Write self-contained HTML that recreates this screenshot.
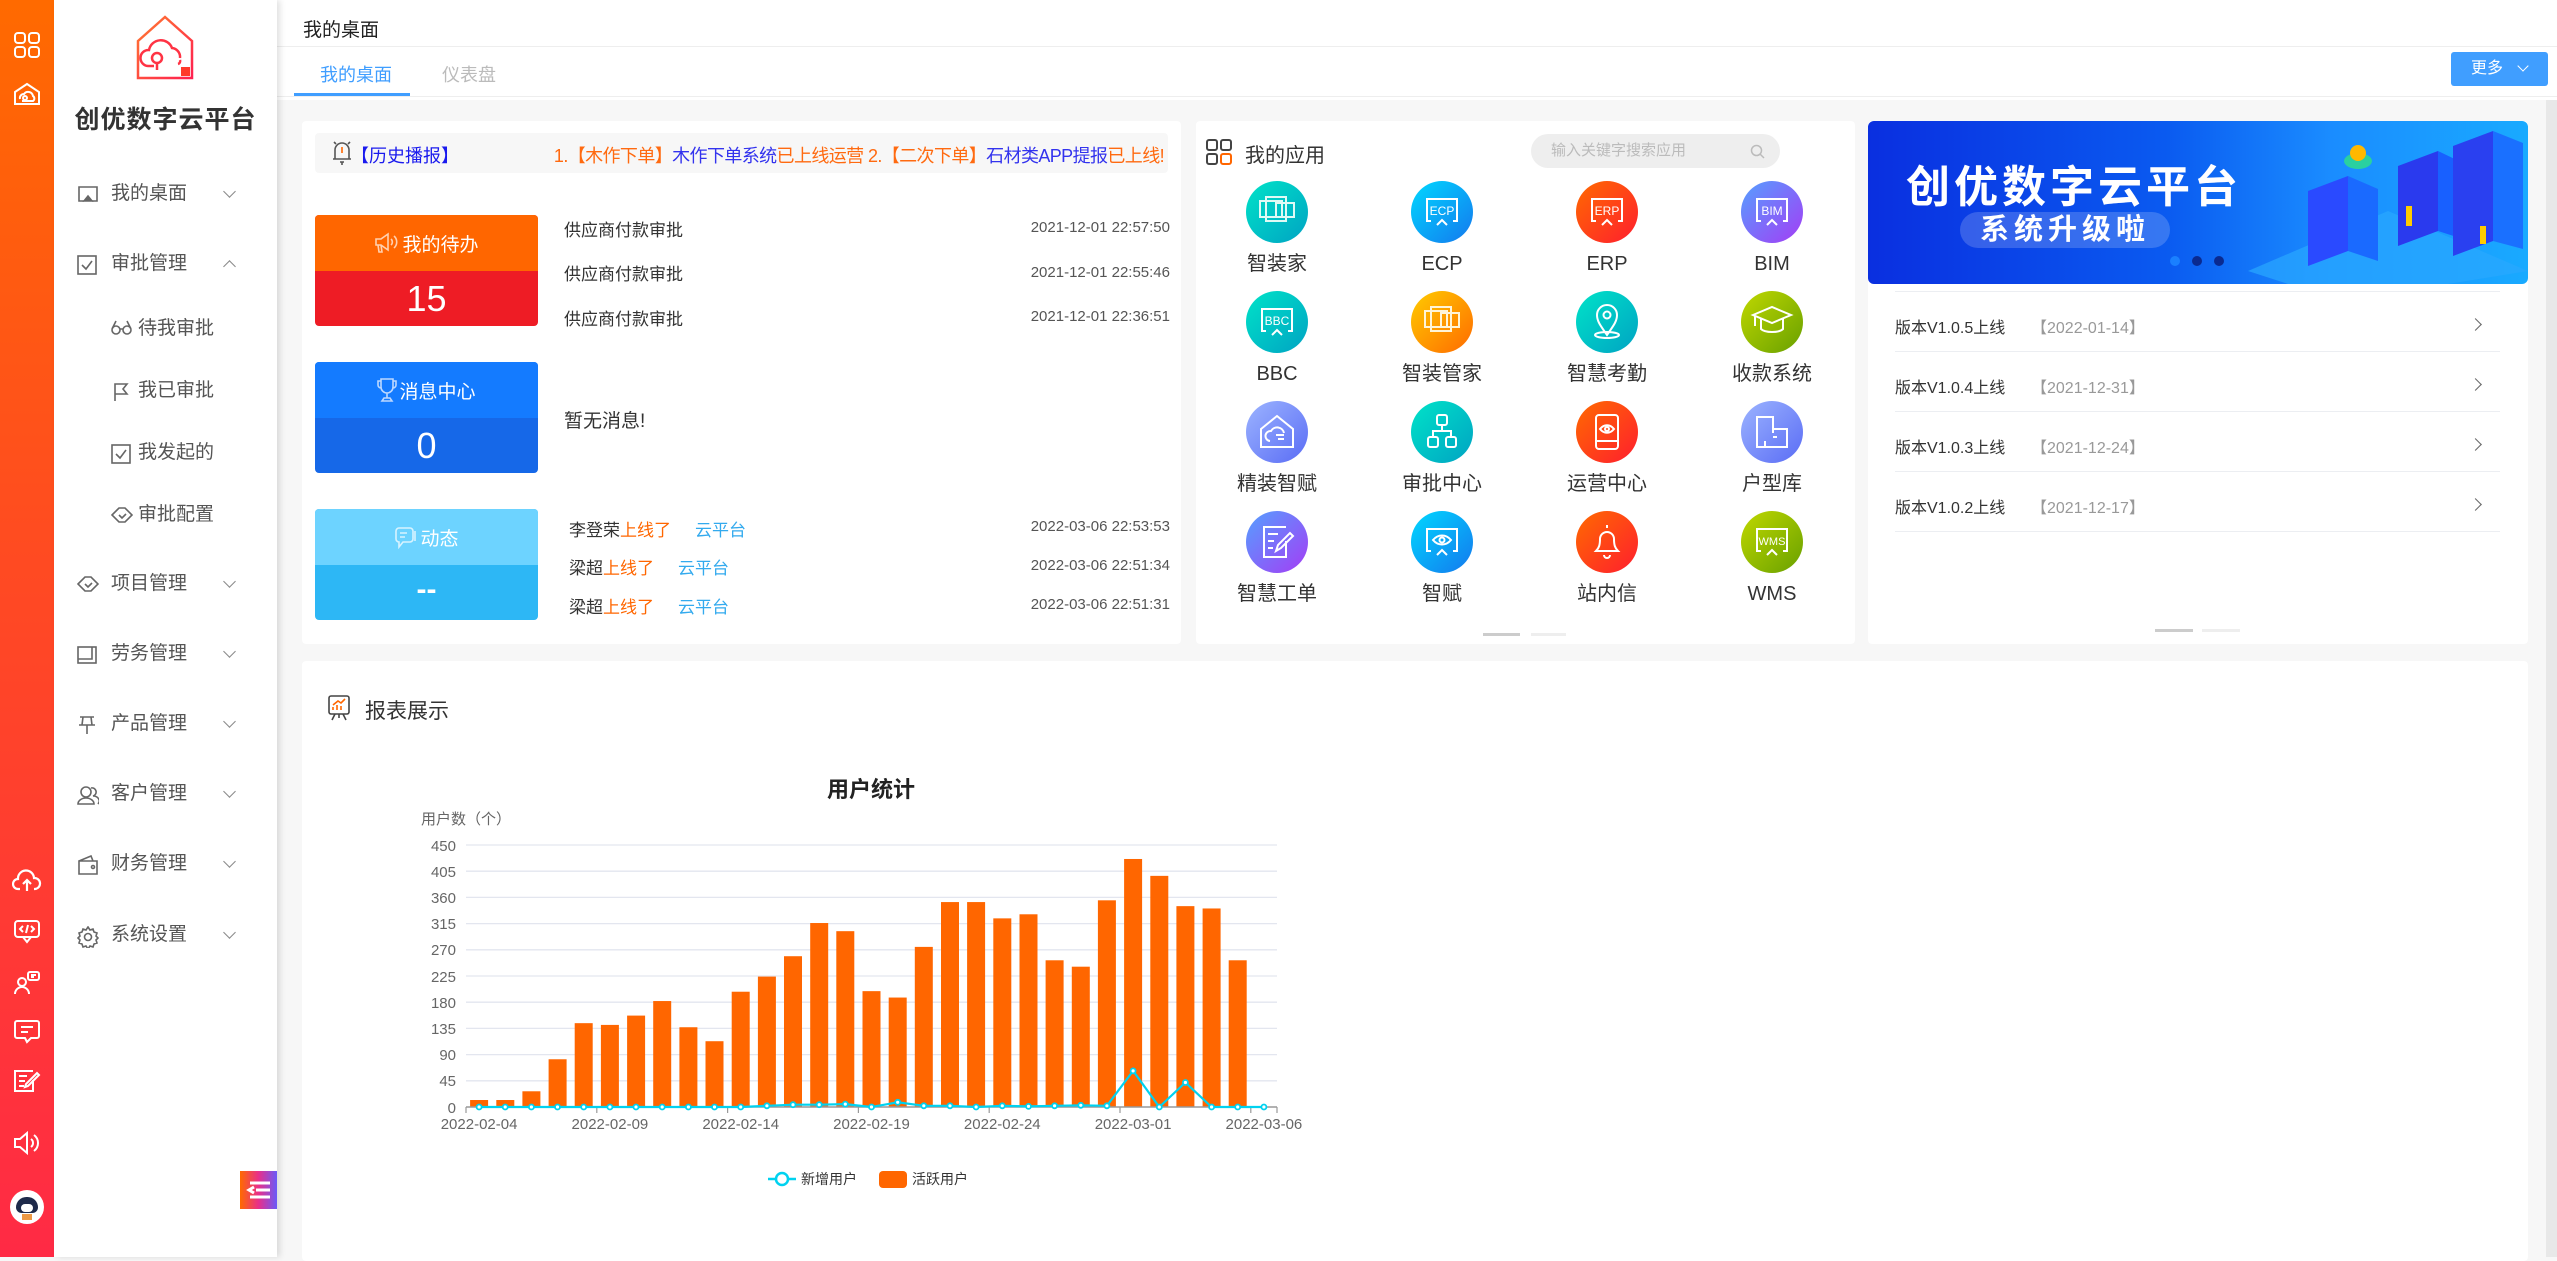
<!DOCTYPE html>
<html><head><meta charset="utf-8">
<style>
*{margin:0;padding:0;box-sizing:border-box}
body{width:2557px;height:1257px;overflow:hidden;position:relative;background:#f7f7f7;font-family:"Liberation Sans","Noto Sans CJK SC",sans-serif;color:#333}
.a{position:absolute}
.bar{left:0;top:0;width:54px;height:1257px;background:linear-gradient(180deg,#ff6a00 0%,#ff4a22 45%,#ff2a45 100%)}
.side{left:54px;top:0;width:223px;height:1257px;background:#fff;box-shadow:3px 0 6px rgba(0,0,0,.12);z-index:2}
.mi{position:absolute;left:0;width:223px;height:30px;font-size:19px;color:#555;line-height:30px}
.mi svg{position:absolute;left:23px;top:6px}
.mi span{position:absolute;left:57px}
.mi i{position:absolute;left:171px;top:8px;width:9px;height:9px;border-right:1.4px solid #888;border-bottom:1.4px solid #888;transform:rotate(45deg)}
.mi i.up{transform:rotate(-135deg);top:13px}
.sub span{left:84px}
.sub svg{left:57px}
.card{background:#fff;border-radius:4px}
.box{position:absolute;left:315px;width:223px;border-radius:4px;overflow:hidden;color:#fff;text-align:center}
.box .t{font-size:19px;display:flex;align-items:center;justify-content:center;gap:2px}
.row{position:absolute;font-size:17px;color:#333}
.tm{position:absolute;right:1387px;font-size:15px;color:#555}
.app{position:absolute;width:150px;text-align:center}
.app .c{width:62px;height:62px;border-radius:50%;margin:0 auto;display:flex;align-items:center;justify-content:center}
.app .l{font-size:20px;color:#333;margin-top:4px;line-height:24px}
.ver{position:absolute;left:1895px;width:605px;height:60px;border-bottom:1px solid #eceef2;font-size:16px;color:#333}
.ver span{position:absolute;top:22px}
.ver b{font-weight:normal;color:#999;position:absolute;left:136px;top:22px}
.ver i{position:absolute;right:20px;top:28px;width:9px;height:9px;border-right:1.4px solid #666;border-top:1.4px solid #666;transform:rotate(45deg)}
</style></head><body>

<div class="a bar">
 <svg class="a" style="left:13px;top:31px" width="28" height="28" viewBox="0 0 28 28" fill="none" stroke="#fff" stroke-width="2"><rect x="2" y="2" width="10" height="10" rx="3"/><rect x="16" y="2" width="10" height="10" rx="3"/><rect x="2" y="16" width="10" height="10" rx="3"/><rect x="16" y="16" width="10" height="10" rx="3"/></svg>
 <svg class="a" style="left:13px;top:82px" width="28" height="24" viewBox="0 0 28 24" fill="none" stroke="#fff" stroke-width="2"><path d="M2 10 L14 2 L26 10 V22 H2 Z"/><path d="M7 17 a4 4 0 0 1 4-5 a5 5 0 0 1 9 2 a3 3 0 0 1 0 5 H9"/><circle cx="12" cy="16" r="2"/></svg>
 <svg class="a" style="left:12px;top:868px" width="30" height="26" viewBox="0 0 30 26" fill="none" stroke="#fff" stroke-width="2.2"><path d="M8 21 H6 a5 5 0 0 1 0-10 a8 8 0 0 1 16-1 a5 5 0 0 1 1 11 h-1"/><path d="M15 23 V12 M11 16 l4-4 4 4"/></svg>
 <svg class="a" style="left:13px;top:919px" width="28" height="26" viewBox="0 0 28 26" fill="none" stroke="#fff" stroke-width="2"><rect x="2" y="2" width="24" height="16" rx="3"/><path d="M10 18 l4 5 4-5 M10 7 l-3 3 3 3 M18 7 l3 3-3 3 M15 6 l-2 8"/></svg>
 <svg class="a" style="left:13px;top:970px" width="28" height="26" viewBox="0 0 28 26" fill="none" stroke="#fff" stroke-width="2"><circle cx="9" cy="12" r="4"/><path d="M2 24 a7 7 0 0 1 14 0"/><rect x="15" y="2" width="11" height="8" rx="2"/><path d="M18 5 h5 M18 7 h3"/></svg>
 <svg class="a" style="left:13px;top:1019px" width="28" height="26" viewBox="0 0 28 26" fill="none" stroke="#fff" stroke-width="2"><path d="M4 2 H24 a2 2 0 0 1 2 2 V17 a2 2 0 0 1-2 2 H18 l-4 4 -2-4 H4 a2 2 0 0 1-2-2 V4 a2 2 0 0 1 2-2z"/><path d="M8 8 h12 M8 13 h7"/></svg>
 <svg class="a" style="left:13px;top:1068px" width="28" height="26" viewBox="0 0 28 26" fill="none" stroke="#fff" stroke-width="2"><path d="M20 12 V23 H2 V3 H20"/><path d="M6 8 h8 M6 13 h6 M6 18 h5 M12 19 l3-1 11-11 -2-2 -11 11z"/></svg>
 <svg class="a" style="left:13px;top:1130px" width="28" height="26" viewBox="0 0 28 26" fill="none" stroke="#fff" stroke-width="2"><path d="M2 9 H7 L14 3 V23 L7 17 H2 Z"/><path d="M18 9 a5 5 0 0 1 0 8 M21 5 a10 10 0 0 1 0 16"/></svg>
 <div class="a" style="left:10px;top:1190px;width:34px;height:34px;border-radius:50%;background:#fff;overflow:hidden"><div class="a" style="left:6px;top:7px;width:22px;height:16px;border-radius:11px 11px 6px 6px;background:#1e2a4a"></div><div class="a" style="left:11px;top:14px;width:12px;height:8px;border-radius:4px;background:#fff"></div><div class="a" style="left:12px;top:24px;width:10px;height:6px;background:#e94"></div></div>
</div>

<div class="a side">
 <svg class="a" style="left:81px;top:14px" width="60" height="66" viewBox="0 0 60 66" fill="none" stroke-width="2.5"><defs><linearGradient id="lg" x1="0" y1="0" x2="1" y2="1"><stop offset="0" stop-color="#ff7a30"/><stop offset="1" stop-color="#ff2050"/></linearGradient></defs><path d="M30 3 L57 27 V64 H3 V27 Z" stroke="url(#lg)"/><path d="M19 52 H13 a8 8 0 0 1 1-16 a12 12 0 0 1 23-2 a9 9 0 0 1 8 10" stroke="#ff3344"/><circle cx="22" cy="44" r="5" stroke="#ff3344"/><path d="M22 49 V56 M45 46 a3 3 0 0 1-2 4" stroke="#ff3344"/><rect x="46" y="53" width="9" height="9" fill="#ff3a2a" stroke="none"/></svg>
 <div class="a" style="left:0;top:100px;width:223px;text-align:center;font-size:25px;font-weight:bold;color:#333;letter-spacing:1px">创优数字云平台</div>

 <div class="mi" style="top:179px"><svg width="22" height="18" viewBox="0 0 22 18" fill="none" stroke="#666" stroke-width="1.6"><path d="M7 16 H2 V2 H20 V16 H15"/><path d="M7 16 L11 11 L15 16Z" fill="#666"/></svg><span>我的桌面</span><i></i></div>
 <div class="mi" style="top:249px"><svg width="20" height="20" viewBox="0 0 20 20" fill="none" stroke="#666" stroke-width="1.6"><rect x="1" y="1" width="18" height="18"/><path d="M5 10 l4 4 6-8"/></svg><span>审批管理</span><i class="up"></i></div>
 <div class="mi sub" style="top:314px"><svg width="22" height="16" viewBox="0 0 22 16" fill="none" stroke="#666" stroke-width="1.6"><circle cx="5" cy="10" r="4"/><circle cx="16" cy="10" r="4"/><path d="M9 9 h3 M1 9 l4-8 M20 9 l-4-8"/></svg><span>待我审批</span></div>
 <div class="mi sub" style="top:376px"><svg width="20" height="20" viewBox="0 0 20 20" fill="none" stroke="#666" stroke-width="1.6"><path d="M4 19 V2 H16 L12 7 L16 12 H4"/></svg><span>我已审批</span></div>
 <div class="mi sub" style="top:438px"><svg width="20" height="20" viewBox="0 0 20 20" fill="none" stroke="#666" stroke-width="1.6"><rect x="1" y="1" width="18" height="18"/><path d="M5 10 l4 4 6-8"/></svg><span>我发起的</span></div>
 <div class="mi sub" style="top:500px"><svg width="22" height="18" viewBox="0 0 22 18" fill="none" stroke="#666" stroke-width="1.6"><path d="M1 9 L8 2 H14 L21 9 L14 16 H8 Z M8 9 l3 3 4-4"/></svg><span>审批配置</span></div>
 <div class="mi" style="top:569px"><svg width="22" height="18" viewBox="0 0 22 18" fill="none" stroke="#666" stroke-width="1.6"><path d="M1 9 L8 2 H14 L21 9 L14 16 H8 Z M8 9 l3 3 4-4"/></svg><span>项目管理</span><i></i></div>
 <div class="mi" style="top:639px"><svg width="20" height="20" viewBox="0 0 20 20" fill="none" stroke="#666" stroke-width="1.6"><rect x="1" y="2" width="18" height="16"/><path d="M1 14 H15 V2"/></svg><span>劳务管理</span><i></i></div>
 <div class="mi" style="top:709px"><svg width="20" height="20" viewBox="0 0 20 20" fill="none" stroke="#666" stroke-width="1.6"><path d="M3 2 H17 M6 2 L5 10 H15 L14 2 M2 10 H18 M10 10 V19"/></svg><span>产品管理</span><i></i></div>
 <div class="mi" style="top:779px"><svg width="22" height="20" viewBox="0 0 22 20" fill="none" stroke="#666" stroke-width="1.6"><circle cx="9" cy="7" r="5"/><path d="M1 19 a8 6 0 0 1 16 0Z M14 3 a4 4 0 0 1 2 8 a6 5 0 0 1 5 8"/></svg><span>客户管理</span><i></i></div>
 <div class="mi" style="top:849px"><svg width="22" height="20" viewBox="0 0 22 20" fill="none" stroke="#666" stroke-width="1.6"><path d="M2 6 H20 V19 H2 Z M2 6 L14 1 L16 6"/><circle cx="16" cy="12" r="1.5"/></svg><span>财务管理</span><i></i></div>
 <div class="mi" style="top:920px"><svg width="22" height="22" viewBox="0 0 22 22" fill="none" stroke="#666" stroke-width="1.6"><circle cx="11" cy="11" r="3.5"/><path d="M11 1 l2 3 3-1 1 3 3 1-1 3 2 2-2 2 1 3-3 1-1 3-3-1-2 3-2-3-3 1-1-3-3-1 1-3-2-2 2-2-1-3 3-1 1-3 3 1z"/></svg><span>系统设置</span><i></i></div>

 <div class="a" style="left:186px;top:1171px;width:37px;height:38px;background:linear-gradient(90deg,#ff6a00,#e8308a,#6a5af9)"><svg class="a" style="left:6px;top:9px" width="26" height="20" viewBox="0 0 26 20" stroke="#fff" stroke-width="3" fill="none"><path d="M4 3 H24 M10 10 H24 M4 17 H24 M8 7 L3 10 L8 13"/></svg></div>
</div>

<!-- header -->
<div class="a" style="left:277px;top:0;width:2280px;height:100px;background:#fff"></div>
<div class="a" style="left:303px;top:15px;font-size:19px;color:#222">我的桌面</div>
<div class="a" style="left:277px;top:46px;width:2280px;height:1px;background:#eee"></div>
<div class="a" style="left:320px;top:61px;font-size:18px;color:#409eff">我的桌面</div>
<div class="a" style="left:442px;top:61px;font-size:18px;color:#bbb">仪表盘</div>
<div class="a" style="left:294px;top:93px;width:116px;height:3px;background:#409eff"></div>
<div class="a" style="left:277px;top:96px;width:2280px;height:1px;background:#eee"></div>
<div class="a" style="left:2451px;top:52px;width:97px;height:34px;background:#409eff;border-radius:3px;color:#fff;font-size:16px;line-height:34px;padding-left:20px">更多<span class="a" style="left:68px;top:10px;width:8px;height:8px;border-right:1.5px solid #fff;border-bottom:1.5px solid #fff;transform:rotate(45deg)"></span></div>
<div class="a" style="left:2546px;top:100px;width:11px;height:1157px;background:#e8e8e8"></div>

<!-- left card -->
<div class="a card" style="left:302px;top:121px;width:879px;height:523px"></div>
<div class="a" style="left:315px;top:133px;width:853px;height:40px;background:#f7f7f7;border-radius:4px;overflow:hidden">
 <svg class="a" style="left:17px;top:7px" width="20" height="26" viewBox="0 0 20 26" fill="none" stroke="#555" stroke-width="1.6"><path d="M3 19 V10 a7 7 0 0 1 14 0 V19 H1 H19 M8 22 h4 M10 22 v3 M4 4 l-2-2 M16 4 l2-2"/><path d="M10 7 v6" stroke="#ff6600"/></svg>
 <div class="a" style="left:36px;top:9px;font-size:18px;color:#1a1aee">【历史播报】</div>
 <div class="a" style="right:4px;top:9px;font-size:18px;white-space:nowrap;letter-spacing:-0.6px;color:#ff6a10">1.【木作下单】<span style="color:#3333ee">木作下单系统</span>已上线运营 2.【二次下单】<span style="color:#3333ee">石材类APP提报</span>已上线!</div>
</div>

<div class="box" style="top:215px;height:111px;background:#ee1c25">
 <div class="t" style="height:56px;background:#ff6600"><svg width="26" height="22" viewBox="0 0 26 22" fill="none" stroke="#ffd0b0" stroke-width="1.6"><path d="M2 7 H7 L14 2 V18 L7 13 H2 Z M4 13 l1 7 h3 l-1-7 M17 7 a4 4 0 0 1 0 6 M20 4 a8 8 0 0 1 0 12"/></svg>我的待办</div>
 <div style="font-size:36px;line-height:55px">15</div>
</div>
<div class="row" style="left:564px;top:216px">供应商付款审批</div><div class="tm" style="top:219px">2021-12-01 22:57:50</div>
<div class="row" style="left:564px;top:260px">供应商付款审批</div><div class="tm" style="top:264px">2021-12-01 22:55:46</div>
<div class="row" style="left:564px;top:305px">供应商付款审批</div><div class="tm" style="top:308px">2021-12-01 22:36:51</div>

<div class="box" style="top:362px;height:111px;background:#1668e8">
 <div class="t" style="height:56px;background:#147bff"><svg width="20" height="26" viewBox="0 0 20 26" fill="none" stroke="#bcd8ff" stroke-width="1.6"><path d="M4 2 H16 V10 a6 6 0 0 1-12 0Z M4 4 H1 v4 a3 3 0 0 0 3 3 M16 4 h3 v4 a3 3 0 0 1-3 3 M10 16 v5 M5 24 H15 L13 21 H7 Z"/></svg>消息中心</div>
 <div style="font-size:36px;line-height:55px">0</div>
</div>
<div class="row" style="left:564px;top:406px;font-size:19px">暂无消息!</div>

<div class="box" style="top:509px;height:111px;background:#2db7f5">
 <div class="t" style="height:56px;background:#6dd3ff"><svg width="24" height="24" viewBox="0 0 24 24" fill="none" stroke="#d8f3ff" stroke-width="1.6"><path d="M2 6 a3 3 0 0 1 3-3 H16 a3 3 0 0 1 3 3 V14 a3 3 0 0 1-3 3 H9 L5 22 V17 a3 3 0 0 1-3-3Z M6 8 h7 M6 12 h5 M21 6 v10"/></svg>动态</div>
 <div style="font-size:30px;line-height:50px;font-weight:bold">--</div>
</div>
<div class="row" style="left:569px;top:516px">李登荣<span style="color:#ff6600">上线了</span><span style="color:#33aaee;margin-left:24px">云平台</span></div><div class="tm" style="top:518px">2022-03-06 22:53:53</div>
<div class="row" style="left:569px;top:554px">梁超<span style="color:#ff6600">上线了</span><span style="color:#33aaee;margin-left:24px">云平台</span></div><div class="tm" style="top:557px">2022-03-06 22:51:34</div>
<div class="row" style="left:569px;top:593px">梁超<span style="color:#ff6600">上线了</span><span style="color:#33aaee;margin-left:24px">云平台</span></div><div class="tm" style="top:596px">2022-03-06 22:51:31</div>

<!-- apps card -->
<div class="a card" style="left:1196px;top:121px;width:659px;height:523px"></div>
<svg class="a" style="left:1206px;top:139px" width="26" height="26" viewBox="0 0 26 26" fill="none" stroke-width="2"><rect x="1" y="1" width="10" height="10" rx="2" stroke="#444"/><rect x="15" y="1" width="10" height="10" rx="2" stroke="#444"/><rect x="1" y="15" width="10" height="10" rx="2" stroke="#444"/><rect x="15" y="15" width="10" height="10" rx="2" stroke="#ff6600"/></svg>
<div class="a" style="left:1245px;top:139px;font-size:20px;color:#333">我的应用</div>
<div class="a" style="left:1531px;top:134px;width:249px;height:34px;background:#eeeeee;border-radius:17px;font-size:15px;color:#bbb;line-height:34px;padding-left:20px">输入关键字搜索应用<svg class="a" style="left:219px;top:10px" width="15" height="15" viewBox="0 0 15 15" fill="none" stroke="#bbb" stroke-width="1.5"><circle cx="6.5" cy="6.5" r="5"/><path d="M10 10 l4 4"/></svg></div>

<svg width="0" height="0" style="position:absolute"><defs>
<linearGradient id="gT" x1="0" y1="0" x2="1" y2="1"><stop offset="0" stop-color="#00e3c8"/><stop offset="1" stop-color="#00a3c3"/></linearGradient>
<linearGradient id="gB" x1="0" y1="0" x2="1" y2="1"><stop offset="0" stop-color="#00d8ff"/><stop offset="1" stop-color="#1478ee"/></linearGradient>
<linearGradient id="gR" x1="0" y1="0" x2="1" y2="1"><stop offset="0" stop-color="#ff6a00"/><stop offset="1" stop-color="#ff1e2e"/></linearGradient>
<linearGradient id="gP" x1="0" y1="0" x2="1" y2="1"><stop offset="0" stop-color="#55a0ff"/><stop offset="1" stop-color="#a43cf5"/></linearGradient>
<linearGradient id="gY" x1="0" y1="0" x2="1" y2="1"><stop offset="0" stop-color="#ffcc00"/><stop offset="1" stop-color="#ff6a00"/></linearGradient>
<linearGradient id="gG" x1="0" y1="0" x2="1" y2="1"><stop offset="0" stop-color="#c0d800"/><stop offset="1" stop-color="#68a000"/></linearGradient>
<linearGradient id="gL" x1="0" y1="0" x2="1" y2="1"><stop offset="0" stop-color="#9cb4ff"/><stop offset="1" stop-color="#5a6cf5"/></linearGradient>
</defs></svg>

<div class="app" style="left:1202px;top:181px"><svg width="62" height="62"><circle cx="31" cy="31" r="31" fill="url(#gT)"/><g fill="none" stroke="#dffaf5" stroke-width="2"><rect x="14" y="20" width="22" height="16"/><rect x="20" y="16" width="20" height="24"/><rect x="30" y="22" width="18" height="14"/></g></svg><div class="l">智装家</div></div>
<div class="app" style="left:1367px;top:181px"><svg width="62" height="62"><circle cx="31" cy="31" r="31" fill="url(#gB)"/><g fill="none" stroke="#fff" stroke-width="2"><path d="M20 40 h-4 v-22 h30 v22 h-4 M26 44 l5-5 5 5"/></g><text x="31" y="34" font-size="12" fill="#fff" text-anchor="middle" font-family="Liberation Sans">ECP</text></svg><div class="l">ECP</div></div>
<div class="app" style="left:1532px;top:181px"><svg width="62" height="62"><circle cx="31" cy="31" r="31" fill="url(#gR)"/><g fill="none" stroke="#fff" stroke-width="2"><path d="M20 40 h-4 v-22 h30 v22 h-4 M26 44 l5-5 5 5"/></g><text x="31" y="34" font-size="12" fill="#fff" text-anchor="middle" font-family="Liberation Sans">ERP</text></svg><div class="l">ERP</div></div>
<div class="app" style="left:1697px;top:181px"><svg width="62" height="62"><circle cx="31" cy="31" r="31" fill="url(#gP)"/><g fill="none" stroke="#fff" stroke-width="2"><path d="M20 40 h-4 v-22 h30 v22 h-4 M26 44 l5-5 5 5"/></g><text x="31" y="34" font-size="12" fill="#fff" text-anchor="middle" font-family="Liberation Sans">BIM</text></svg><div class="l">BIM</div></div>

<div class="app" style="left:1202px;top:291px"><svg width="62" height="62"><circle cx="31" cy="31" r="31" fill="url(#gT)"/><g fill="none" stroke="#fff" stroke-width="2"><path d="M20 40 h-4 v-22 h30 v22 h-4 M26 44 l5-5 5 5"/></g><text x="31" y="34" font-size="12" fill="#fff" text-anchor="middle" font-family="Liberation Sans">BBC</text></svg><div class="l">BBC</div></div>
<div class="app" style="left:1367px;top:291px"><svg width="62" height="62"><circle cx="31" cy="31" r="31" fill="url(#gY)"/><g fill="none" stroke="#fff4d8" stroke-width="2"><rect x="14" y="20" width="22" height="16"/><rect x="20" y="16" width="20" height="24"/><rect x="30" y="22" width="18" height="14"/></g></svg><div class="l">智装管家</div></div>
<div class="app" style="left:1532px;top:291px"><svg width="62" height="62"><circle cx="31" cy="31" r="31" fill="url(#gT)"/><g fill="none" stroke="#fff" stroke-width="2"><path d="M31 44 C24 34 21 30 21 24 a10 10 0 0 1 20 0 c0 6-3 10-10 20z"/><circle cx="31" cy="24" r="3.5"/><ellipse cx="31" cy="44" rx="12" ry="3"/></g></svg><div class="l">智慧考勤</div></div>
<div class="app" style="left:1697px;top:291px"><svg width="62" height="62"><circle cx="31" cy="31" r="31" fill="url(#gG)"/><g fill="none" stroke="#fff" stroke-width="2"><path d="M12 24 L31 16 L50 24 L31 32 Z M20 28 v10 c4 4 18 4 22 0 v-10 M14 25 v10"/></g></svg><div class="l">收款系统</div></div>

<div class="app" style="left:1202px;top:401px"><svg width="62" height="62"><circle cx="31" cy="31" r="31" fill="url(#gL)"/><g fill="none" stroke="#fff" stroke-width="2"><path d="M15 28 L31 15 L47 28 V46 H15 Z M24 40 a5 5 0 0 1 1-10 a7 7 0 0 1 13 2 M30 34 h8 M32 38 h6"/></g></svg><div class="l">精装智赋</div></div>
<div class="app" style="left:1367px;top:401px"><svg width="62" height="62"><circle cx="31" cy="31" r="31" fill="url(#gT)"/><g fill="none" stroke="#fff" stroke-width="2"><rect x="26" y="14" width="10" height="10" rx="2"/><rect x="17" y="36" width="10" height="10" rx="2"/><rect x="35" y="36" width="10" height="10" rx="2"/><path d="M31 24 v6 M22 36 v-6 h18 v6"/></g></svg><div class="l">审批中心</div></div>
<div class="app" style="left:1532px;top:401px"><svg width="62" height="62"><circle cx="31" cy="31" r="31" fill="url(#gR)"/><g fill="none" stroke="#fff" stroke-width="2"><rect x="20" y="14" width="22" height="34" rx="3"/><path d="M20 40 h22 M24 28 c4-5 10-5 14 0 c-4 5-10 5-14 0z"/><circle cx="31" cy="28" r="2"/></g></svg><div class="l">运营中心</div></div>
<div class="app" style="left:1697px;top:401px"><svg width="62" height="62"><circle cx="31" cy="31" r="31" fill="url(#gL)"/><g fill="none" stroke="#fff" stroke-width="2"><path d="M16 16 H32 V28 H46 V46 H16 Z M32 36 h4 M32 28 v4 M24 46 v-6"/></g></svg><div class="l">户型库</div></div>

<div class="app" style="left:1202px;top:511px"><svg width="62" height="62"><circle cx="31" cy="31" r="31" fill="url(#gP)"/><g fill="none" stroke="#fff" stroke-width="2"><path d="M40 30 V46 H18 V16 H40 M22 23 h10 M22 30 h6 M22 37 h5 M30 40 l2-6 12-12 3 3 -12 12z"/></g></svg><div class="l">智慧工单</div></div>
<div class="app" style="left:1367px;top:511px"><svg width="62" height="62"><circle cx="31" cy="31" r="31" fill="url(#gB)"/><g fill="none" stroke="#fff" stroke-width="2"><path d="M20 40 h-4 v-22 h30 v22 h-4 M26 44 l5-5 5 5 M22 29 c5-6 13-6 18 0 c-5 6-13 6-18 0z"/><circle cx="31" cy="29" r="2.5"/></g></svg><div class="l">智赋</div></div>
<div class="app" style="left:1532px;top:511px"><svg width="62" height="62"><circle cx="31" cy="31" r="31" fill="url(#gR)"/><g fill="none" stroke="#fff" stroke-width="2"><path d="M20 40 h22 c-3-3-4-6-4-12 a7 7 0 0 0-14 0 c0 6-1 9-4 12z M31 14 v3 M28 44 a3 3 0 0 0 6 0"/></g></svg><div class="l">站内信</div></div>
<div class="app" style="left:1697px;top:511px"><svg width="62" height="62"><circle cx="31" cy="31" r="31" fill="url(#gG)"/><g fill="none" stroke="#fff" stroke-width="2"><path d="M20 40 h-4 v-22 h30 v22 h-4 M26 44 l5-5 5 5"/></g><text x="31" y="34" font-size="11" fill="#fff" text-anchor="middle" font-family="Liberation Sans">WMS</text></svg><div class="l">WMS</div></div>

<div class="a" style="left:1483px;top:633px;width:37px;height:3px;background:#ccc"></div>
<div class="a" style="left:1531px;top:633px;width:35px;height:3px;background:#eee"></div>

<!-- right card -->
<div class="a card" style="left:1868px;top:121px;width:660px;height:523px"></div>
<div class="a" style="left:1868px;top:121px;width:660px;height:163px;border-radius:6px;overflow:hidden;background:linear-gradient(90deg,#0a2fe0 0%,#0a5af0 45%,#1a8cff 70%,#19aaff 100%)">
 <div class="a" style="left:38px;top:30px;font-size:44px;font-weight:bold;color:#fff;letter-spacing:4px;white-space:nowrap">创优数字云平台</div>
 <div class="a" style="left:92px;top:91px;width:210px;height:36px;border-radius:18px;background:rgba(255,255,255,.18);color:#fff;font-size:29px;font-weight:bold;text-align:center;line-height:36px;letter-spacing:5px">系统升级啦</div>
 <div class="a" style="left:302px;top:135px;width:10px;height:10px;border-radius:50%;background:#1a80ff"></div>
 <div class="a" style="left:324px;top:135px;width:10px;height:10px;border-radius:50%;background:#0a2a90"></div>
 <div class="a" style="left:346px;top:135px;width:10px;height:10px;border-radius:50%;background:#0a2a90"></div>
 <svg class="a" style="left:380px;top:0" width="280" height="163" viewBox="0 0 280 163">
  <path d="M0 150 L140 90 L280 150 L200 163 L40 163Z" fill="#2aa8ff" opacity=".7"/>
  <path d="M60 70 L100 55 L100 130 L60 145Z" fill="#2a4aff"/><path d="M100 55 L130 68 L130 140 L100 130Z" fill="#1a6aff"/>
  <path d="M150 45 L190 30 L190 110 L150 125Z" fill="#2a3aee"/><path d="M190 30 L215 42 L215 118 L190 110Z" fill="#1860ff"/>
  <path d="M205 25 L245 10 L245 120 L205 135Z" fill="#2a40f0"/><path d="M245 10 L275 22 L275 128 L245 120Z" fill="#1a70ff"/>
  <rect x="158" y="85" width="6" height="20" fill="#ffcc00"/><rect x="232" y="105" width="6" height="18" fill="#ffcc00"/>
  <ellipse cx="110" cy="40" rx="14" ry="8" fill="#2ad0a0"/><circle cx="110" cy="32" r="8" fill="#ffb800"/>
 </svg>
</div>
<div class="a" style="left:1895px;top:291px;width:605px;height:1px;background:#eceef2"></div>
<div class="ver" style="top:292px"><span>版本V1.0.5上线</span><b>【2022-01-14】</b><i></i></div>
<div class="ver" style="top:352px"><span>版本V1.0.4上线</span><b>【2021-12-31】</b><i></i></div>
<div class="ver" style="top:412px"><span>版本V1.0.3上线</span><b>【2021-12-24】</b><i></i></div>
<div class="ver" style="top:472px"><span>版本V1.0.2上线</span><b>【2021-12-17】</b><i></i></div>
<div class="a" style="left:2155px;top:629px;width:38px;height:3px;background:#ccc"></div>
<div class="a" style="left:2202px;top:629px;width:38px;height:3px;background:#eee"></div>

<!-- bottom card -->
<div class="a card" style="left:302px;top:661px;width:2226px;height:600px"></div>
<svg class="a" style="left:327px;top:694px" width="24" height="28" viewBox="0 0 24 28" fill="none" stroke-width="1.6"><rect x="2" y="2" width="20" height="18" rx="2" stroke="#444"/><path d="M8 20 l-3 6 M16 20 l3 6 M12 20 v4" stroke="#444"/><path d="M6 16 v-3 M10 16 v-5 M14 16 v-4 M6 11 l5-4 3 2 4-4" stroke="#ff6600"/></svg>
<div class="a" style="left:365px;top:695px;font-size:21px;color:#333">报表展示</div>

<div class="a" style="left:771px;top:772px;width:200px;text-align:center;font-size:22px;font-weight:bold;color:#222">用户统计</div>
<div class="a" style="left:421px;top:808px;font-size:15px;color:#666">用户数（个）</div>

<svg class="a" style="left:380px;top:830px" width="960" height="400" viewBox="380 830 960 400" font-family="Liberation Sans" font-size="15" fill="#666">
 <g stroke="#e3e6ef" stroke-width="1.3">
  <line x1="466" x2="1277" y1="845" y2="845"/><line x1="466" x2="1277" y1="871.2" y2="871.2"/><line x1="466" x2="1277" y1="897.4" y2="897.4"/><line x1="466" x2="1277" y1="923.6" y2="923.6"/><line x1="466" x2="1277" y1="949.8" y2="949.8"/><line x1="466" x2="1277" y1="976" y2="976"/><line x1="466" x2="1277" y1="1002.2" y2="1002.2"/><line x1="466" x2="1277" y1="1028.4" y2="1028.4"/><line x1="466" x2="1277" y1="1054.6" y2="1054.6"/><line x1="466" x2="1277" y1="1080.8" y2="1080.8"/>
 </g>
 <g text-anchor="end">
  <text x="456" y="851">450</text><text x="456" y="877">405</text><text x="456" y="903">360</text><text x="456" y="929">315</text><text x="456" y="955">270</text><text x="456" y="982">225</text><text x="456" y="1008">180</text><text x="456" y="1034">135</text><text x="456" y="1060">90</text><text x="456" y="1086">45</text><text x="456" y="1113">0</text>
 </g>
 <g transform="translate(0,1107) scale(1,-0.5822)" fill="#ff6600">
  <rect x="470.1" y="0" width="18" height="12"/><rect x="496.3" y="0" width="18" height="12"/><rect x="522.4" y="0" width="18" height="27"/><rect x="548.6" y="0" width="18" height="82"/><rect x="574.7" y="0" width="18" height="144"/><rect x="600.9" y="0" width="18" height="141"/><rect x="627.1" y="0" width="18" height="157"/><rect x="653.2" y="0" width="18" height="182"/><rect x="679.4" y="0" width="18" height="137"/><rect x="705.5" y="0" width="18" height="113"/><rect x="731.7" y="0" width="18" height="198"/><rect x="757.9" y="0" width="18" height="224"/><rect x="784" y="0" width="18" height="259"/><rect x="810.2" y="0" width="18" height="316"/><rect x="836.3" y="0" width="18" height="302"/><rect x="862.5" y="0" width="18" height="199"/><rect x="888.7" y="0" width="18" height="188"/><rect x="914.8" y="0" width="18" height="275"/><rect x="941" y="0" width="18" height="352"/><rect x="967.1" y="0" width="18" height="352"/><rect x="993.3" y="0" width="18" height="324"/><rect x="1019.5" y="0" width="18" height="331"/><rect x="1045.6" y="0" width="18" height="252"/><rect x="1071.8" y="0" width="18" height="241"/><rect x="1097.9" y="0" width="18" height="355"/><rect x="1124.1" y="0" width="18" height="426"/><rect x="1150.3" y="0" width="18" height="397"/><rect x="1176.4" y="0" width="18" height="345"/><rect x="1202.6" y="0" width="18" height="341"/><rect x="1228.7" y="0" width="18" height="252"/>
 </g>
 <line x1="466" x2="1277" y1="1107" y2="1107" stroke="#999" stroke-width="1.5"/>
 <g stroke="#999" stroke-width="1.2"><line x1="466" x2="466" y1="1107" y2="1113"/><line x1="596.8" x2="596.8" y1="1107" y2="1113"/><line x1="727.6" x2="727.6" y1="1107" y2="1113"/><line x1="858.4" x2="858.4" y1="1107" y2="1113"/><line x1="989.2" x2="989.2" y1="1107" y2="1113"/><line x1="1120" x2="1120" y1="1107" y2="1113"/><line x1="1250.8" x2="1250.8" y1="1107" y2="1113"/><line x1="1277" x2="1277" y1="1107" y2="1113"/></g>
 <polyline fill="none" stroke="#00d2f0" stroke-width="2.2" points="479.1,1107 505.2,1107 531.4,1107 557.5,1107 583.7,1107 609.9,1107 636,1107 662.2,1107 688.4,1107 714.5,1107 740.7,1107 766.9,1105.8 793,1104.7 819.2,1104.7 845.3,1104.1 871.5,1107 897.7,1102.3 923.8,1105.8 950,1105.8 976.1,1107 1002.3,1105.8 1028.5,1106.4 1054.6,1105.8 1080.8,1105.3 1106.9,1105.8 1133.1,1070.9 1159.3,1107 1185.4,1082.5 1211.6,1107 1237.7,1107 1263.9,1107"/>
 <g fill="#fff" stroke="#00d2f0" stroke-width="1.8">
  <circle cx="479.1" cy="1107" r="2.5"/><circle cx="505.2" cy="1107" r="2.5"/><circle cx="531.4" cy="1107" r="2.5"/><circle cx="557.5" cy="1107" r="2.5"/><circle cx="583.7" cy="1107" r="2.5"/><circle cx="609.9" cy="1107" r="2.5"/><circle cx="636" cy="1107" r="2.5"/><circle cx="662.2" cy="1107" r="2.5"/><circle cx="688.4" cy="1107" r="2.5"/><circle cx="714.5" cy="1107" r="2.5"/><circle cx="740.7" cy="1107" r="2.5"/><circle cx="766.9" cy="1105.8" r="2.5"/><circle cx="793" cy="1104.7" r="2.5"/><circle cx="819.2" cy="1104.7" r="2.5"/><circle cx="845.3" cy="1104.1" r="2.5"/><circle cx="871.5" cy="1107" r="2.5"/><circle cx="897.7" cy="1102.3" r="2.5"/><circle cx="923.8" cy="1105.8" r="2.5"/><circle cx="950" cy="1105.8" r="2.5"/><circle cx="976.1" cy="1107" r="2.5"/><circle cx="1002.3" cy="1105.8" r="2.5"/><circle cx="1028.5" cy="1106.4" r="2.5"/><circle cx="1054.6" cy="1105.8" r="2.5"/><circle cx="1080.8" cy="1105.3" r="2.5"/><circle cx="1106.9" cy="1105.8" r="2.5"/><circle cx="1133.1" cy="1070.9" r="2.5"/><circle cx="1159.3" cy="1107" r="2.5"/><circle cx="1185.4" cy="1082.5" r="2.5"/><circle cx="1211.6" cy="1107" r="2.5"/><circle cx="1237.7" cy="1107" r="2.5"/><circle cx="1263.9" cy="1107" r="2.5"/>
 </g>
 <g text-anchor="middle" font-size="15">
  <text x="479.1" y="1129">2022-02-04</text><text x="609.9" y="1129">2022-02-09</text><text x="740.7" y="1129">2022-02-14</text><text x="871.5" y="1129">2022-02-19</text><text x="1002.3" y="1129">2022-02-24</text><text x="1133.1" y="1129">2022-03-01</text><text x="1263.9" y="1129">2022-03-06</text>
 </g>
 <line x1="768" x2="796" y1="1179" y2="1179" stroke="#00d2f0" stroke-width="2.5"/>
 <circle cx="782" cy="1179" r="6" fill="#fff" stroke="#00d2f0" stroke-width="2.5"/>
 <text x="801" y="1184" font-size="14" fill="#333">新增用户</text>
 <rect x="879" y="1171" width="28" height="17" rx="4" fill="#ff6600"/>
 <text x="912" y="1184" font-size="14" fill="#333">活跃用户</text>
</svg>

</body></html>
